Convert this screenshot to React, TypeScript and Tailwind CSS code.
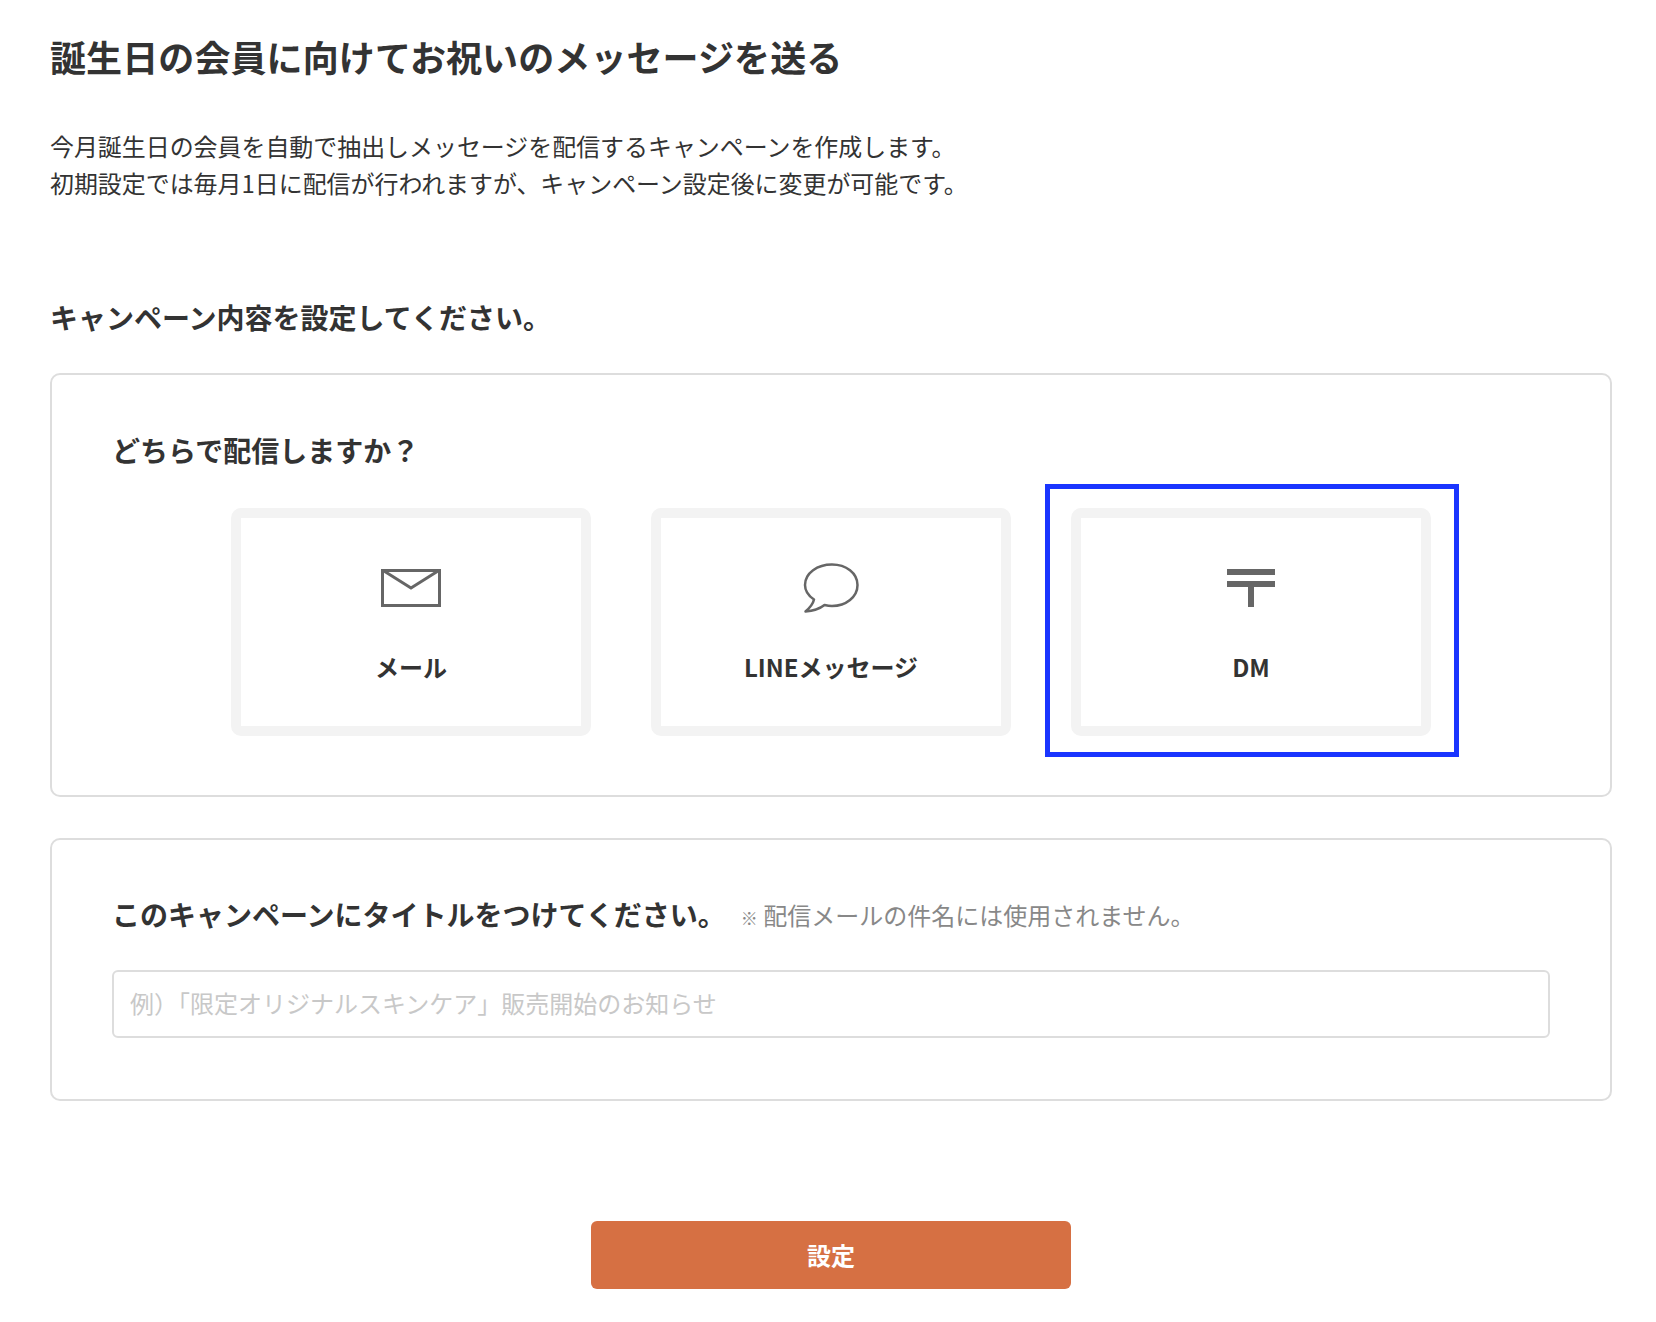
export default function App() {
  const font = { fontFamily: '"Noto Sans CJK JP", "Noto Sans", sans-serif' };
  return (
    <div style={font} className="w-[1656px] h-[1322px] bg-white text-[#333] pl-[50px] pr-[44px] pt-[30px] overflow-hidden">
      <h1 className="text-[36px] leading-[52px] font-bold m-0 tracking-[0.1px]">誕生日の会員に向けてお祝いのメッセージを送る</h1>
      <p className="mt-[46px] text-[23.95px] leading-[36.5px] font-normal">
        今月誕生日の会員を自動で抽出しメッセージを配信するキャンペーンを作成します。
        <br />
        初期設定では毎月1日に配信が行われますが、キャンペーン設定後に変更が可能です。
      </p>
      <h2 className="mt-[96px] text-[28px] leading-[40px] font-bold">キャンペーン内容を設定してください。</h2>
      <section className="mt-[36px] h-[424px] border-2 border-[#ddd] rounded-[10px] pl-[60px] pt-[55px] relative">
        <h3 className="text-[28px] leading-[40px] font-bold">どちらで配信しますか？</h3>
        <div className="mt-[38px] ml-[119px] flex gap-[60px]">
          <Option label="メール">
            <svg width="60" height="38" viewBox="0 0 60 38" fill="none" stroke="#666" strokeWidth="3">
              <rect x="1.5" y="1.5" width="57" height="35" />
              <path d="M3 2 L30 19 L57 2" />
            </svg>
          </Option>
          <Option label="LINEメッセージ">
            <svg width="56" height="50" viewBox="0 0 56 50" fill="none" stroke="#666" strokeWidth="2.5" strokeLinejoin="round">
              <path d="M29 1.5 C43 1.5 54.5 10 54.5 22 C54.5 34 43 43 29 43 C26.5 43 24 42.6 21.5 42 C17 45.5 10 48 2.5 48.5 C6 45.5 10 41 11 36.5 C5 32.5 2 27.5 2 22 C2 10 14.5 1.5 29 1.5 Z" />
            </svg>
          </Option>
          <div className="relative">
            <Option label="DM">
              <svg width="48" height="38" viewBox="0 0 48 38" fill="#666">
                <rect x="0" y="0" width="48" height="6" />
                <rect x="0" y="12" width="48" height="6" />
                <rect x="21" y="18" width="6" height="20" />
              </svg>
            </Option>
            <div className="absolute left-[-26px] top-[-24px] w-[414px] h-[273px] border-[5px] border-[#1a35ff]" />
          </div>
        </div>
      </section>
      <section className="mt-[41px] h-[263px] border-2 border-[#ddd] rounded-[10px] px-[60px] pt-[54px]">
        <div className="flex items-baseline">
          <h3 className="text-[28px] leading-[40px] font-bold">このキャンペーンにタイトルをつけてください。</h3>
          <span className="ml-[15px] text-[24px] text-[#888] -translate-y-px"><span className="text-[17px]">※</span> 配信メールの件名には使用されません。</span>
        </div>
        <input
          readOnly
          placeholder="例）「限定オリジナルスキンケア」販売開始のお知らせ"
          className="mt-[36px] block w-full h-[68px] border-2 border-[#ddd] rounded-[6px] px-[16px] pb-[3px] text-[24px] outline-none placeholder:text-[#c8c8c8]"
          style={font}
        />
      </section>
      <button className="block mt-[120px] ml-[541px] w-[480px] h-[68px] rounded-[6px] bg-[#d67043] text-white text-[24px] font-bold">設定</button>
    </div>
  );
}

function Option({ label, children }: { label: string; children: React.ReactNode }) {
  return (
    <div className="w-[360px] h-[228px] border-[10px] border-[#f3f3f3] rounded-[10px] flex flex-col items-center">
      <div className="h-[50px] mt-[45px] flex items-center justify-center">{children}</div>
      <div className="mt-[36px] text-[24px] leading-[36px] font-bold">{label}</div>
    </div>
  );
}
